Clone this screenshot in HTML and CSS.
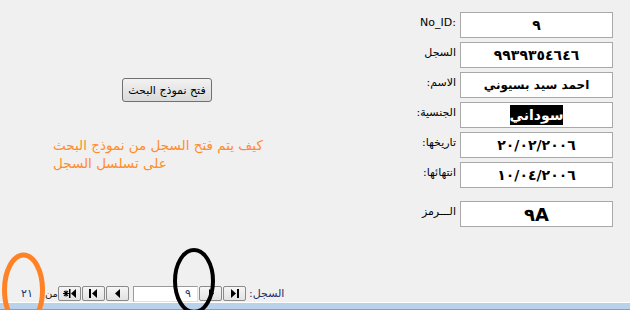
FILE: index.html
```html
<!DOCTYPE html>
<html lang="ar">
<head>
    <meta charset="utf-8">
    <title>نموذج السجل</title>
    <link rel="stylesheet" href="styles.css">
</head>
<body>
<div class="screen">
    <div class="main">
        <div class="side">
            <button class="open-search">فتح نموذج البحث</button>
            <p class="note">كيف يتم فتح السجل من نموذج البحث<br>على تسلسل السجل</p>
        </div>

        <div class="record-form">
            <div class="field">
                <span class="label label-latin">No_ID:</span>
                <div class="box">٩</div>
            </div>
            <div class="field">
                <span class="label">السجل</span>
                <div class="box box-wide">٩٩٣٩٣٥٤٦٤٦</div>
            </div>
            <div class="field">
                <span class="label">الاسم:</span>
                <div class="box box-name">احمد سيد بسيوني</div>
            </div>
            <div class="field">
                <span class="label">الجنسية:</span>
                <div class="box"><span class="selected">سوداني</span></div>
            </div>
            <div class="field">
                <span class="label">تاريخها:</span>
                <div class="box box-spaced">٢٠/٠٢/٢٠٠٦</div>
            </div>
            <div class="field">
                <span class="label">انتهائها:</span>
                <div class="box box-spaced">١٠/٠٤/٢٠٠٦</div>
            </div>
            <div class="field field-last">
                <span class="label">الـــرمز</span>
                <div class="box box-big">٩A</div>
            </div>
        </div>
    </div>

    <!-- record navigation -->
    <div class="navbar">
        <span class="count">٢١</span>
        <span class="of">من</span>
        <span class="nav-btn">
            <svg width="14" height="9" viewBox="0 0 14 9"><path d="M0 4.5h6M3 1.5v6M1 2l4 5M5 2l-4 5" stroke="#000" stroke-width="1.2"/><rect x="6" y="0" width="1.5" height="9"/><polygon points="13,0 13,9 8,4.5"/></svg>
        </span>
        <span class="nav-btn">
            <svg width="9" height="9" viewBox="0 0 9 9"><rect x="0" y="0" width="2" height="9"/><polygon points="8,0 8,9 3,4.5"/></svg>
        </span>
        <span class="nav-btn">
            <svg width="6" height="9" viewBox="0 0 6 9"><polygon points="5,0 5,9 0,4.5"/></svg>
        </span>
        <span class="current">٩</span>
        <span class="nav-btn">
            <svg width="6" height="9" viewBox="0 0 6 9"><polygon points="1,0 1,9 6,4.5"/></svg>
        </span>
        <span class="nav-btn">
            <svg width="9" height="9" viewBox="0 0 9 9"><polygon points="1,0 1,9 6,4.5"/><rect x="7" y="0" width="2" height="9"/></svg>
        </span>
        <span class="nav-label">السجل:</span>
    </div>
    <div class="statusbar"></div>

    <!-- hand drawn marks over the screenshot -->
    <svg class="marks" width="630" height="310" viewBox="0 0 630 310">
        <ellipse cx="23.5" cy="290" rx="19" ry="35" fill="none" stroke="#ff8326" stroke-width="5"/>
        <ellipse cx="194" cy="281" rx="19" ry="31" fill="none" stroke="#000" stroke-width="4"/>
    </svg>
</div>
</body>
</html>
```

FILE: styles.css
```css
* {
	box-sizing: border-box;
}

body {
	margin: 0;
	background-color: #f0f0f0;
	font-family: "DejaVu Sans", sans-serif;
}

.screen {
	position: relative;
	width: 630px;
	height: 310px;
	display: flex;
	flex-direction: column;
	overflow: hidden;
}

.main {
	height: 285px;
	display: flex;
	justify-content: space-between;
}

.side {
	padding-left: 53px;
	padding-top: 78px;
}

.open-search {
	display: block;
	margin-left: 69px;
	width: 90px;
	height: 24px;
	padding: 0;
	border: 1px solid #707070;
	border-radius: 3px;
	background: linear-gradient(#f2f2f2, #e6e6e6 50%, #dadada);
	font-family: "DejaVu Sans", sans-serif;
	font-size: 11px;
	color: #000;
	direction: rtl;
}

.note {
	margin: 34px 0 0;
	direction: rtl;
	text-align: left;
	font-size: 13.5px;
	line-height: 18px;
	color: #ff8c2a;
}

.record-form {
	padding-top: 12px;
	padding-right: 17px;
	display: flex;
	flex-direction: column;
	gap: 4px;
}

.field {
	display: flex;
	align-items: flex-start;
	justify-content: flex-end;
}

.field-last {
	margin-top: 9px;
}

.label {
	margin-right: 4px;
	padding-top: 4px;
	font-size: 11px;
	color: #000;
	direction: rtl;
}

.label-latin {
	direction: ltr;
}

.box {
	width: 153px;
	height: 26px;
	border: 1px solid #a8a8a8;
	background-color: #fff;
	display: flex;
	align-items: center;
	justify-content: center;
	font-size: 14px;
	font-weight: bold;
	color: #000;
}

.box-spaced {
	letter-spacing: 1.5px;
}

.box-wide {
	letter-spacing: 3px;
}

.box-name {
	font-size: 12px;
}

.box-big {
	font-size: 18px;
}

.selected {
	background-color: #000;
	color: #fff;
	padding: 1px 0;
	line-height: 18px;
}

.navbar {
	height: 17px;
	padding-left: 21px;
	display: flex;
	align-items: center;
	font-size: 11px;
	color: #1d2f6e;
}

.count {
	flex: none;
	width: 24px;
}

.of {
	flex: none;
	width: 13px;
	padding-right: 1px;
	text-align: right;
	font-size: 10px;
	color: #222;
}

.nav-btn {
	flex: none;
	width: 23px;
	height: 15px;
	margin-right: 1px;
	border: 1px solid #8a8a8a;
	border-radius: 2px;
	background: linear-gradient(#f6f6f6, #e2e2e2);
	display: flex;
	align-items: center;
	justify-content: center;
}

.current {
	flex: none;
	width: 65px;
	height: 16px;
	margin: 0 1px 0 3px;
	padding-right: 6px;
	border: 1px solid #9a9a9a;
	border-right-color: #e0e0e0;
	border-bottom-color: #e0e0e0;
	background-color: #fff;
	text-align: right;
	line-height: 14px;
	color: #1d2f6e;
}

.nav-label {
	margin-left: 2px;
	direction: rtl;
}

.statusbar {
	height: 8px;
	border-top: 1px solid #ffffff;
	border-bottom: 1px solid #3dbfd6;
	background-color: #b9d1ea;
}

.marks {
	position: absolute;
	left: 0;
	top: 0;
	pointer-events: none;
}
```
